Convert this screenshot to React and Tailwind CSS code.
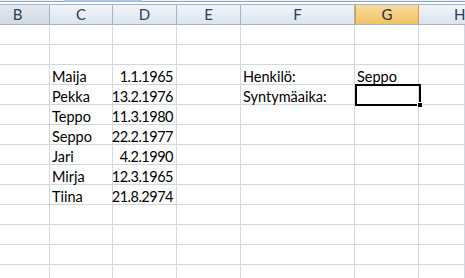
const cols = [
  { key: "B", w: "w-[50px]" },
  { key: "C", w: "w-[63px]" },
  { key: "D", w: "w-[64px]" },
  { key: "E", w: "w-[64px]" },
  { key: "F", w: "w-[114px]" },
  { key: "G", w: "w-[64px]" },
  { key: "H", w: "flex-1" },
];

const data = {
  3: { C: "Maija", D: "1.1.1965", F: "Henkilö:", G: "Seppo" },
  4: { C: "Pekka", D: "13.2.1976", F: "Syntymäaika:" },
  5: { C: "Teppo", D: "11.3.1980" },
  6: { C: "Seppo", D: "22.2.1977" },
  7: { C: "Jari", D: "4.2.1990" },
  8: { C: "Mirja", D: "12.3.1965" },
  9: { C: "Tiina", D: "21.8.2974" },
};

const rows = [1, 2, 3, 4, 5, 6, 7, 8, 9, 10, 11, 12, 13];

const headerStyle = (key) => {
  if (key === "G")
    return "bg-gradient-to-b from-[#f9dba0] to-[#f2c260] border-[#f29436] border-l text-[#1f2f45]";
  if (key === "B")
    return "bg-gradient-to-b from-[#e3e7ec] to-[#d3dae3] border-[#9eb6ce] text-[#27415f] pr-[14px]";
  if (key === "H")
    return "bg-gradient-to-b from-[#f1f4f9] to-[#dce4ee] border-[#9eb6ce] text-[#27415f] justify-start pl-[35px]";
  return "bg-gradient-to-b from-[#f1f4f9] to-[#dce4ee] border-[#9eb6ce] text-[#27415f]";
};

const Header = () => (
  <div className="flex h-[21px] border-y border-[#9eb6ce]">
    {cols.map((c) => (
      <div
        key={c.key}
        className={`${c.w} shrink-0 flex items-center justify-center text-[15px] border-r ${headerStyle(c.key)}`}
      >
        {c.key}
      </div>
    ))}
  </div>
);

const App = () => {
  return (
    <div
      className="relative w-[465px] h-[278px] overflow-hidden bg-white"
      style={{ fontFamily: "Lato, 'Open Sans', sans-serif" }}
    >
      <div className="flex flex-col h-[4px]">
        <div className="h-[1px] bg-[#eef2f7]">
          <div className="ml-[64px] w-[78px] h-[1px] bg-[#b3c8e2]" />
        </div>
        <div className="h-[1px] bg-[#8ea6c4]">
          <div className="ml-[64px] w-[78px] h-[1px] bg-[#9fb9da]" />
        </div>
      </div>
      <Header />
      {rows.map((r) => (
        <div key={r} className="flex h-[20px] border-b border-[#d0d7e5]">
          {cols.map((c) => {
            const v = data[r] && data[r][c.key];
            const right = c.key === "D";
            return (
              <div
                key={c.key}
                className={`${c.w} shrink-0 border-r border-[#d0d7e5] flex items-end text-[14.5px] leading-[14px] text-black whitespace-nowrap ${
                  right ? "justify-end pr-[3px] tracking-[-0.5px]" : "pl-[2px]"
                }`}
              >
                {v}
              </div>
            );
          })}
        </div>
      ))}
      <div className="absolute left-[355px] top-[84px] w-[66px] h-[22px] border-2 border-black" />
      <div className="absolute left-[417px] top-[102px] w-[6px] h-[6px] bg-black border border-white" />
    </div>
  );
};

export default App;
